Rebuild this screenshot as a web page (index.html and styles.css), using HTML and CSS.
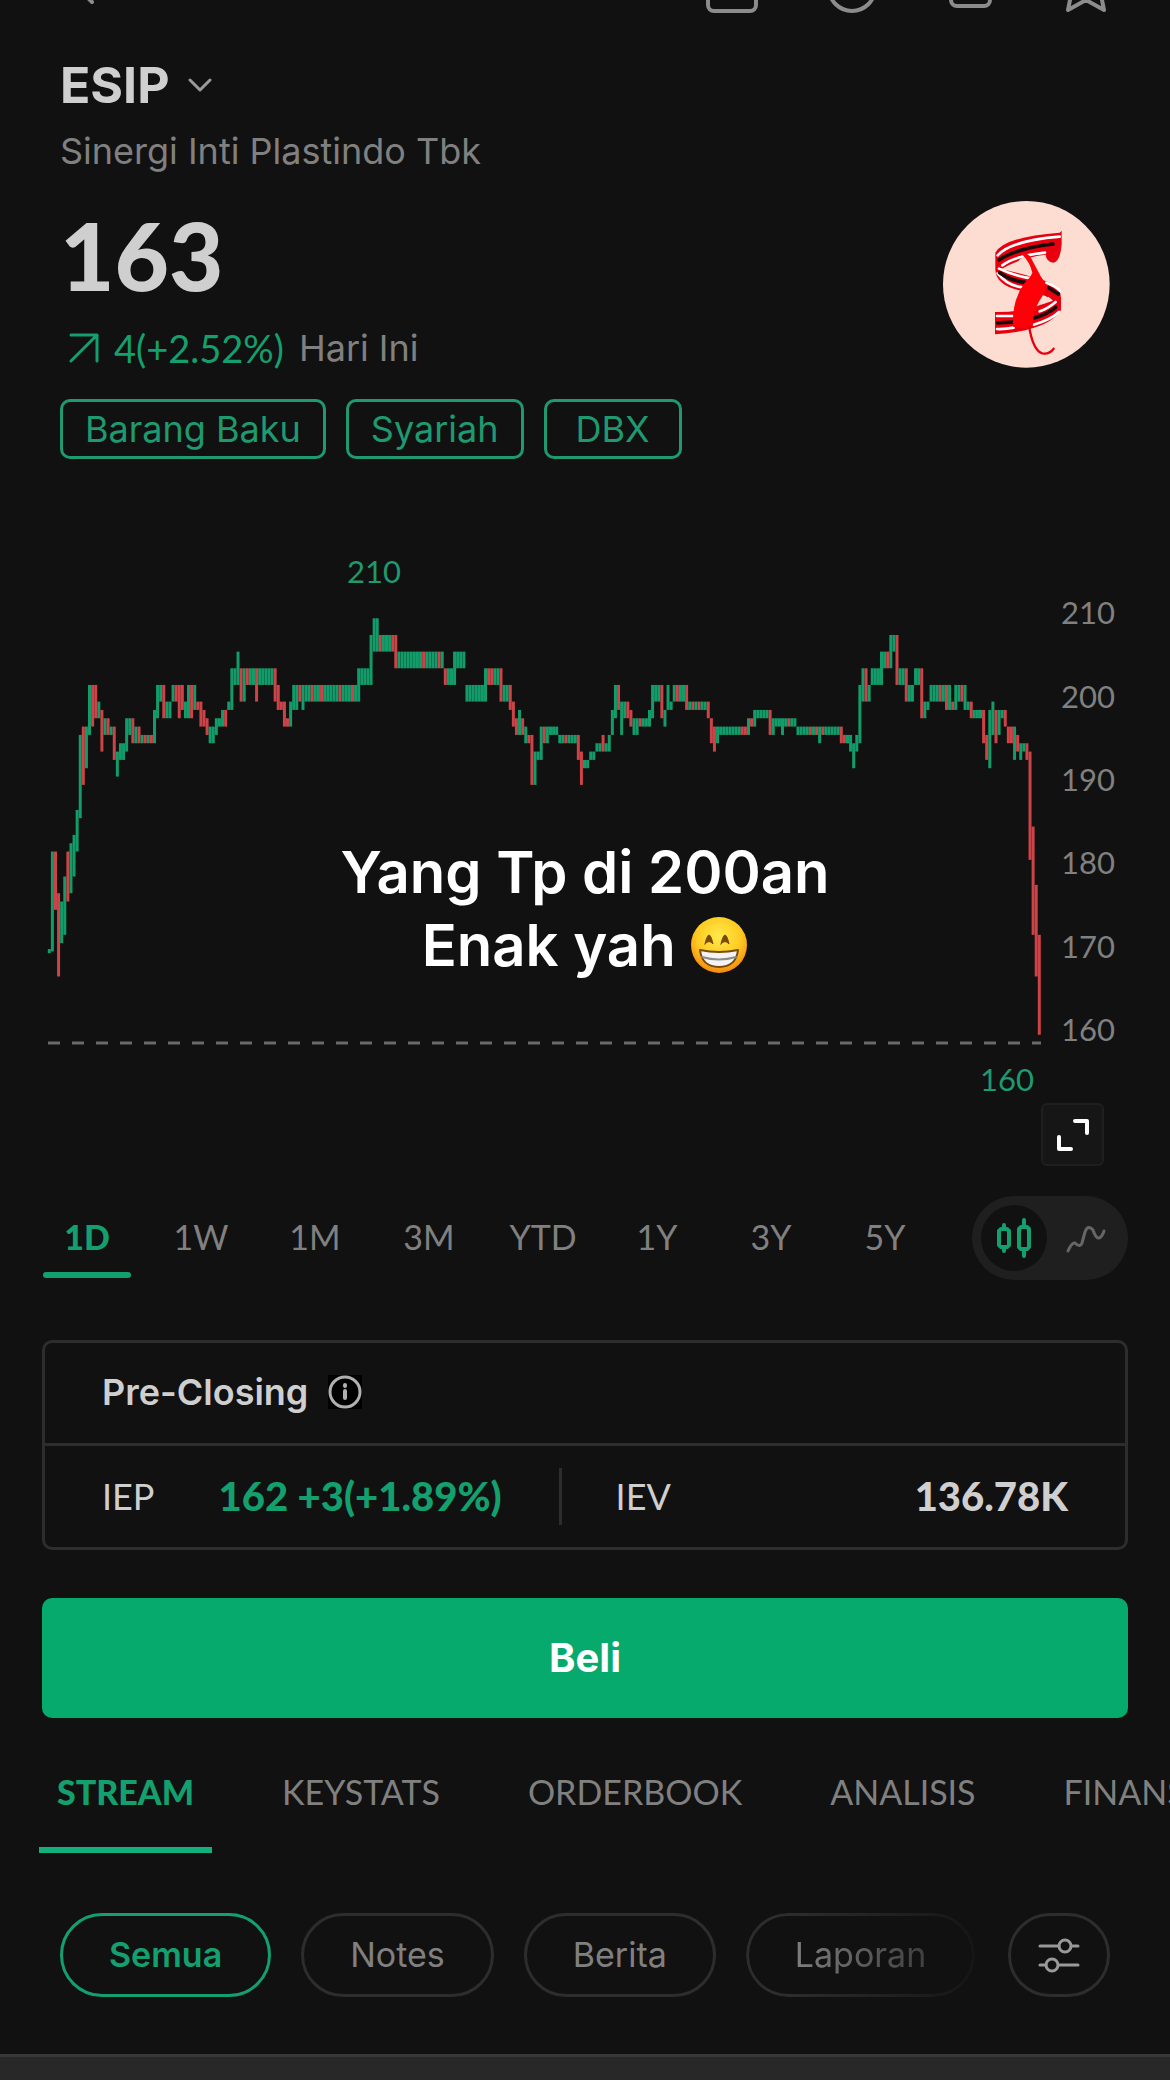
FILE: index.html
```html
<!DOCTYPE html>
<html lang="id">
<head>
    <meta charset="UTF-8">
    <meta name="viewport" content="width=device-width, initial-scale=1.0">
    <title>ESIP - Sinergi Inti Plastindo Tbk</title>

    <link rel="stylesheet" href="styles.css">
</head>
<body>

    <!-- Top bar, scrolled almost out of view -->
    <header class="topbar">
        <button class="icon-btn" aria-label="Kembali">
            <svg viewBox="0 0 52 52"><path d="M35 8 L17 25 L32 40"/></svg>
        </button>
        <div class="topbar-actions">
            <button class="icon-btn" aria-label="Catatan">
                <svg viewBox="0 0 52 52"><rect x="2" y="6" width="48" height="43" rx="6"/></svg>
            </button>
            <button class="icon-btn" aria-label="Alarm">
                <svg viewBox="0 0 52 52"><circle cx="27" cy="26" r="23"/></svg>
            </button>
            <button class="icon-btn" aria-label="Bagikan">
                <svg viewBox="0 0 52 52"><rect x="7" y="4" width="39" height="40" rx="6"/></svg>
            </button>
            <button class="icon-btn" aria-label="Watchlist">
                <svg viewBox="0 0 52 52"><path d="M23 3 L30 18 L42 20 L38 33 L41 48 L23 38 L5 48 L8 33 L4 20 L16 18 Z"/></svg>
            </button>
        </div>
    </header>

    <main>
        <!-- Quote -->
        <section class="quote">
            <h1>
                <button class="symbol">ESIP
                    <svg class="chevron" viewBox="0 0 24 14"><path d="M2 2 L12 12 L22 2"/></svg>
                </button>
            </h1>
            <p class="company">Sinergi Inti Plastindo Tbk</p>
            <div class="price-row">
                <div class="price-col">
                    <div class="price">163</div>
                    <div class="change">
                        <svg class="arrow" viewBox="0 0 30 30"><path d="M2 2 H28 V28 M28 2 L2 28"/></svg>
                        <span class="amount up">4(+2.52%)</span>
                        <span>Hari Ini</span>
                    </div>
                </div>
                <svg class="logo" viewBox="36 32 501 499" role="img" aria-label="Logo ESIP">
                    <circle cx="286" cy="281" r="250" fill="#fdddd2"/>
                    <g fill="#e8000f">
                        <path d="M392 120 V160 Q388 212 368 216 Q346 214 344 192 Q272 200 210 236 Q262 246 312 262 Q390 278 390 322 V358 Q352 420 192 431 V364 Q300 366 362 326 Q330 306 280 302 Q196 288 193 238 V186 Q220 138 386 126 Z"/>
                    </g>
                    <g fill="none" stroke="#fff" stroke-width="8">
                        <path d="M200 194 Q240 150 386 138"/>
                        <path d="M214 224 Q250 196 342 186"/>
                        <path d="M204 234 Q250 256 306 264"/>
                        <path d="M200 248 Q230 286 276 290"/>
                        <path d="M198 376 H248"/>
                        <path d="M198 415 Q222 416 248 411"/>
                        <path d="M326 362 Q350 354 374 334"/>
                        <path d="M308 402 Q358 388 384 364"/>
                        <path d="M346 276 Q374 286 386 300"/>
                    </g>
                    <g fill="none" stroke="#1a0a0a" stroke-width="11">
                        <path d="M204 208 Q252 174 366 160"/>
                        <path d="M206 246 Q240 270 282 275"/>
                        <path d="M354 292 L382 310"/>
                        <path d="M200 397 L246 394"/>
                        <path d="M310 382 Q350 370 374 350"/>
                    </g>
                    <path d="M246 240 Q262 200 282 200 Q300 208 304 246 Q272 232 246 240 Z" fill="#fdddd2"/>
                    <path d="M330 342 L352 318 L366 330 Z" fill="#fdddd2"/>
                    <path d="M270 188 Q290 184 300 202 L330 258 Q352 286 338 310 Q300 366 306 404 Q288 418 246 408 Q242 330 280 278 Q300 258 304 246 Q296 212 270 188 Z" fill="#ff0008"/>
                    <path d="M294 406 Q306 480 334 488 Q354 492 368 474" fill="none" stroke="#e8000f" stroke-width="7"/>
                </svg>
            </div>
            <div class="tags">
                <a class="tag" href="#">Barang Baku</a>
                <a class="tag" href="#">Syariah</a>
                <a class="tag" href="#">DBX</a>
            </div>
        </section>

        <!-- Chart -->
        <section class="chart">
            <svg class="plot" viewBox="0 0 1170 560">
                <text class="extreme" x="374" y="43">210</text>
                <g id="candles"></g>
                <path class="baseline" d="M48 503 H1041"/>
                <text class="extreme" x="1007" y="551">160</text>
                <g id="axis"></g>
            </svg>
            <p class="caption">Yang Tp di 200an<br>Enak yah
                <svg class="emoji" viewBox="0 0 58 58" role="img" aria-label="😁">
                    <defs>
                        <radialGradient id="face" cx="50%" cy="35%" r="65%">
                            <stop offset="0" stop-color="#ffe94a"/>
                            <stop offset="0.6" stop-color="#ffcb22"/>
                            <stop offset="1" stop-color="#f5890f"/>
                        </radialGradient>
                    </defs>
                    <circle cx="29" cy="29" r="28" fill="url(#face)"/>
                    <path d="M15 28 Q19 10 23 28 Q19 23 15 28 Z M31 28 Q35 10 39 28 Q35 23 31 28 Z" fill="#7a4a08" stroke="#7a4a08" stroke-width="1"/>
                    <path d="M10 34 Q29 38 48 34 Q46 51 29 51 Q12 51 10 34 Z" fill="#f4f4f4" stroke="#7a4a08" stroke-width="2" stroke-linejoin="round"/>
                    <path d="M12 41 Q29 46 46 41" fill="none" stroke="#8c8c8c" stroke-width="2"/>
                </svg>
            </p>
            <button class="expand" aria-label="Layar penuh">
                <svg viewBox="0 0 32 32"><path d="M18 2 H30 V14 M2 18 V30 H14"/></svg>
            </button>
        </section>

        <!-- Time range -->
        <section class="ranges">
            <div class="range-list">
                <button class="range active">1D</button>
                <button class="range">1W</button>
                <button class="range">1M</button>
                <button class="range">3M</button>
                <button class="range">YTD</button>
                <button class="range">1Y</button>
                <button class="range">3Y</button>
                <button class="range">5Y</button>
            </div>
            <div class="chart-type">
                <button class="type active" aria-label="Candlestick">
                    <svg viewBox="0 0 40 40"><path d="M10 7 V11 M10 29 V33 M5 13 L7 11 H13 L15 13 V27 L13 29 H7 L5 27 Z M30 2 V9 M30 31 V38 M25 11 L27 9 H33 L35 11 V29 L33 31 H27 L25 29 Z"/></svg>
                </button>
                <button class="type" aria-label="Garis">
                    <svg viewBox="0 0 40 40"><path d="M2 33 Q6 24 9 25 Q14 30 16 25 L19 14 Q22 6 27 12 Q30 21 33 20 Q36 19 38 13"/></svg>
                </button>
            </div>
        </section>

        <!-- Pre-closing -->
        <section class="card">
            <h2>Pre-Closing
                <svg class="info" viewBox="0 0 34 34"><rect width="34" height="34"/><circle cx="17" cy="17" r="15"/><path d="M17 16 V23 M17 10 V11"/></svg>
            </h2>
            <div class="card-row">
                <div class="cell">
                    <span>IEP</span>
                    <strong class="up">162 +3(+1.89%)</strong>
                </div>
                <div class="cell">
                    <span>IEV</span>
                    <strong>136.78K</strong>
                </div>
            </div>
        </section>

        <button class="buy">Beli</button>

        <nav class="tabs">
            <a class="tab active" href="#">STREAM</a>
            <a class="tab" href="#">KEYSTATS</a>
            <a class="tab" href="#">ORDERBOOK</a>
            <a class="tab" href="#">ANALISIS</a>
            <a class="tab" href="#">FINANSIAL</a>
        </nav>

        <div class="filters">
            <button class="chip active">Semua</button>
            <button class="chip">Notes</button>
            <button class="chip">Berita</button>
            <button class="chip fade">Laporan</button>
            <button class="chip settings" aria-label="Filter">
                <svg viewBox="0 0 42 36"><path d="M2 9 H21 M34 9 H40 M2 28 H8 M21 28 H40"/><circle cx="27" cy="9" r="6"/><circle cx="14" cy="28" r="6"/></svg>
            </button>
        </div>
    </main>

    <footer class="composer"></footer>

    <script src="chart.js"></script>
</body>
</html>
```
FILE: styles.css
```css
* {
    box-sizing: border-box;
}
body {
    margin: 0;
    background: #111;
    color: #cfcfcf;
    font-family: Lato, "Liberation Sans", sans-serif;
    font-size: 36px;
    line-height: 44px;
    overflow-x: hidden;
}
h1, h2, p {
    margin: 0;
}
button {
    padding: 0;
    border: 0;
    background: none;
    color: inherit;
    font: inherit;
    cursor: pointer;
}
a {
    color: inherit;
    text-decoration: none;
}
svg {
    display: block;
    fill: none;
    stroke-linecap: round;
    stroke-linejoin: round;
}
.up {
    color: #14a06e;
}
.symbol, .company, .change, .tag, .card h2, .buy, .chip, .caption {
    font-family: Inter, "Liberation Sans", sans-serif;
}

/* top bar */
.topbar {
    display: flex;
    justify-content: space-between;
    align-items: flex-end;
    height: 14px;
    padding: 0 55px 0 60px;
    overflow: hidden;
}
.topbar-actions {
    display: flex;
    gap: 67px;
}
.icon-btn svg {
    width: 52px;
    height: 52px;
    stroke: #8c8c8c;
    stroke-width: 4;
}

/* quote */
.quote {
    padding: 41px 60px 0;
    color: #808080;
}
.symbol {
    display: flex;
    align-items: center;
    gap: 18px;
    color: #cfcfcf;
    font-size: 50px;
    font-weight: 700;
    line-height: 60px;
}
.chevron {
    width: 24px;
    height: 14px;
    stroke: #9a9a9a;
    stroke-width: 3;
}
h1 {
    line-height: 60px;
}
.company {
    margin-top: 14px;
}
.price-row {
    display: flex;
    justify-content: space-between;
    align-items: flex-start;
    margin-top: 28px;
}
.price-col {
    padding-top: 6px;
}
.price {
    color: #cfcfcf;
    font-size: 94px;
    font-weight: 900;
    line-height: 96px;
}
.change {
    display: flex;
    align-items: center;
    gap: 15px;
    margin-top: 23px;
    padding-left: 9px;
}
.amount {
    font-family: Lato, "Liberation Sans", sans-serif;
    font-size: 38px;
}
.arrow {
    width: 30px;
    height: 30px;
    stroke: #14a06e;
    stroke-width: 3;
}
.logo {
    width: 167px;
    height: 167px;
}
.tags {
    display: flex;
    gap: 20px;
    margin-top: 29px;
}
.tag {
    min-width: 138px;
    height: 60px;
    padding: 5px 22px;
    border: 3px solid #1f996f;
    border-radius: 10px;
    color: #1f996f;
    text-align: center;
}

/* chart */
.chart {
    position: relative;
    margin-top: 81px;
}
.plot {
    width: 100%;
}
.plot text {
    font-size: 31px;
    fill: #808080;
}
.plot .extreme {
    fill: #1f996f;
    text-anchor: middle;
}
.candle {
    stroke-width: 3;
    stroke-linecap: butt;
}
.candle.rise {
    stroke: #129c69;
}
.candle.fall {
    stroke: #cc4448;
}
.baseline {
    stroke: #6a6a6a;
    stroke-width: 3;
    stroke-dasharray: 12 12;
    stroke-linecap: butt;
}
/* sits over the plot */
.caption {
    position: absolute;
    top: 296px;
    left: 0;
    right: 0;
    color: #fff;
    font-size: 58px;
    font-weight: 600;
    line-height: 73px;
    text-align: center;
}
.emoji {
    display: inline-block;
    width: 58px;
    height: 58px;
    vertical-align: -8px;
}
.expand {
    display: flex;
    align-items: center;
    justify-content: center;
    width: 63px;
    height: 63px;
    margin: 3px 66px 0 auto;
    border: 2px solid #1f1f1f;
    border-radius: 6px;
    background: #161616;
}
.expand svg {
    width: 32px;
    height: 32px;
    stroke: #fff;
    stroke-width: 4;
}

/* time range */
.ranges {
    display: flex;
    gap: 43px;
    margin: 30px 42px 0 43px;
}
.range-list {
    display: grid;
    grid-template-columns: repeat(8, 1fr);
    gap: 26px;
    flex: 1;
}
.range {
    position: relative;
    padding-bottom: 2px;
    color: #808080;
    font-size: 34px;
}
.range.active {
    color: #14a06e;
    font-weight: 900;
}
.range.active::after {
    content: "";
    position: absolute;
    left: 0;
    right: 0;
    bottom: 2px;
    height: 6px;
    border-radius: 3px;
    background: #14a06e;
}
.chart-type {
    display: flex;
    gap: 6px;
    padding: 9px;
    border-radius: 42px;
    background: #1f1f1f;
}
.type {
    display: flex;
    align-items: center;
    justify-content: center;
    width: 66px;
    height: 66px;
    border-radius: 50%;
}
.type.active {
    background: #111;
}
.type svg {
    width: 40px;
    height: 40px;
    stroke: #666;
    stroke-width: 3;
}
.type.active svg {
    stroke: #14a06e;
    stroke-width: 4;
}

/* pre-closing */
.card {
    margin: 60px 42px 0;
    border: 3px solid #2d2d2d;
    border-radius: 10px;
}
.card h2 {
    display: flex;
    align-items: center;
    gap: 20px;
    padding: 27px 57px 29px;
    border-bottom: 3px solid #2d2d2d;
    font-size: 36px;
    font-weight: 600;
}
.info {
    width: 34px;
    height: 34px;
    stroke: #b0b0b0;
    stroke-width: 3;
}
.info rect {
    fill: #000;
    stroke: none;
}
.info path {
    stroke-width: 4;
}
.card-row {
    display: flex;
    padding: 22px 0;
}
.cell {
    display: flex;
    flex: 1;
    justify-content: space-between;
    align-items: center;
    height: 57px;
    padding: 0 57px 2px 54px;
}
.cell:first-child {
    flex: none;
    gap: 64px;
    padding-left: 57px;
    border-right: 3px solid #2d2d2d;
}
.cell strong {
    font-size: 40px;
    font-weight: 900;
}

.buy {
    display: block;
    width: calc(100% - 84px);
    height: 120px;
    margin: 48px 42px 0;
    border-radius: 10px;
    background: #05aa6c;
    color: #fff;
    font-size: 40px;
    font-weight: 700;
}

/* tabs */
.tabs {
    display: flex;
    gap: 52px;
    margin-top: 52px;
    padding-left: 39px;
    overflow: hidden;
    color: #808080;
    font-size: 34px;
}
.tab {
    padding: 0 18px 33px;
    border-bottom: 6px solid transparent;
}
.tab.active {
    border-color: #12b07c;
    color: #14a06e;
    font-weight: 900;
}

/* filters */
.filters {
    display: flex;
    gap: 30px;
    margin: 60px 60px 0;
}
.chip {
    height: 84px;
    padding: 0 46px;
    border: 3px solid #2d2d2d;
    border-radius: 42px;
    color: #808080;
    font-size: 34px;
}
.chip.active {
    border-color: #14a06e;
    color: #14a06e;
    font-weight: 600;
}
.chip.fade {
    -webkit-mask-image: linear-gradient(to right, #000 20%, rgba(0, 0, 0, 0.2));
    mask-image: linear-gradient(to right, #000 20%, rgba(0, 0, 0, 0.2));
}
.chip.settings {
    margin-left: auto;
    padding: 0 27px;
}
.settings svg {
    width: 42px;
    height: 36px;
    stroke: #9a9a9a;
    stroke-width: 3;
}

.composer {
    height: 26px;
    margin-top: 57px;
    border-top: 3px solid #383838;
    background: #282828;
}
```
FILE: chart.js
```js
// runs of candles: colours (g = up, r = down), high, low
var runs = [
    ["g", 170.3, 169.8], ["g", 182, 170], ["r", 182, 175], ["r", 177, 167], ["g", 176, 171],
    ["g", 179, 172], ["r", 182, 176], ["g", 183, 177], ["g", 184, 179], ["g", 187, 182],
    ["g", 196, 186], ["r", 197, 190], ["g", 197, 192], ["g", 202, 196], ["r", 202, 197],
    ["r", 202, 198], ["g", 200, 198], ["r", 199, 194], ["gr", 198, 196], ["g", 197, 196],
    ["r", 197, 193], ["g", 194, 191], ["gg", 195, 193], ["g", 198, 194], ["g", 198, 196],
    ["r", 198, 195], ["gr", 197, 195], ["grgr", 196, 195], ["g", 199, 195], ["g", 202, 198],
    ["g", 202, 200], ["r", 202, 198], ["gg", 200, 198], ["gr", 202, 200], ["r", 202, 198],
    ["r", 202, 199], ["g", 200, 198], ["gr", 202, 198], ["g", 202, 199], ["r", 200, 199],
    ["r", 200, 197], ["r", 199, 197], ["r", 198, 196], ["gg", 197, 195], ["g", 198, 196],
    ["g", 198, 197], ["gr", 199, 197], ["g", 200, 199], ["g", 204, 199], ["g", 204, 202],
    ["g", 206, 202], ["rg", 204, 200], ["rgg", 204, 202], ["r", 204, 200], ["ggggg", 204, 202],
    ["r", 204, 200], ["r", 202, 199], ["r", 200, 199], ["r", 200, 197], ["r", 198, 197],
    ["g", 200, 197], ["gg", 202, 199], ["r", 202, 200], ["g", 202, 199],
    ["ggrggrgggggrgggrg", 202, 200], ["g", 204, 200], ["ggg", 204, 202], ["g", 208, 202],
    ["gg", 210, 206], ["rgggr", 208, 206], ["r", 208, 204], ["ggggggggrggggrg", 206, 204],
    ["rgg", 204, 202], ["g", 206, 202], ["ggg", 206, 204], ["gggggg", 202, 200], ["g", 204, 200],
    ["rrgg", 204, 202], ["r", 204, 200], ["gg", 202, 200], ["r", 202, 199], ["r", 200, 197],
    ["r", 198, 196], ["g", 199, 196], ["r", 198, 196], ["g", 197, 195], ["r", 196, 195],
    ["r", 196, 190], ["g", 194, 190], ["g", 194, 193], ["g", 197, 193], ["rg", 197, 195],
    ["ggg", 197, 196], ["ggrggg", 196, 195], ["r", 196, 193], ["r", 194, 190], ["gg", 193, 192],
    ["gg", 194, 193], ["gg", 195, 194], ["r", 196, 194], ["g", 195, 194], ["g", 196, 194],
    ["g", 199, 196], ["g", 202, 198], ["r", 202, 199], ["g", 200, 196], ["gr", 200, 198],
    ["r", 199, 197], ["gg", 198, 196], ["rgg", 198, 197], ["g", 199, 197], ["g", 202, 198],
    ["gg", 202, 200], ["r", 202, 198], ["g", 199, 197], ["g", 202, 199], ["g", 200, 199],
    ["grgg", 202, 200], ["r", 202, 199], ["grgrgg", 200, 199], ["r", 200, 198], ["r", 198, 195],
    ["r", 197, 194], ["g", 197, 195], ["gggggggrr", 197, 196], ["g", 198, 196], ["r", 198, 197],
    ["g", 199, 197], ["gggg", 199, 198], ["r", 199, 196], ["g", 198, 196], ["gg", 198, 197],
    ["g", 198, 196], ["grgg", 198, 197], ["ggggrgr", 197, 196], ["g", 197, 195],
    ["rggggg", 197, 196], ["r", 197, 195], ["rg", 196, 195], ["g", 196, 194], ["g", 195, 192],
    ["g", 196, 194], ["g", 202, 195], ["gr", 204, 200], ["g", 202, 200], ["ggg", 204, 202],
    ["g", 206, 202], ["gr", 206, 204], ["g", 208, 204], ["g", 208, 206], ["r", 208, 202],
    ["gg", 204, 202], ["r", 204, 200], ["gg", 202, 200], ["gg", 204, 202], ["r", 204, 198],
    ["g", 200, 198], ["g", 200, 199], ["gggrg", 202, 200], ["rg", 202, 199], ["r", 200, 199],
    ["g", 202, 199], ["gr", 202, 200], ["g", 202, 199], ["g", 200, 199], ["r", 200, 198],
    ["ggg", 199, 198], ["r", 199, 195], ["r", 196, 193], ["g", 199, 192], ["g", 200, 196],
    ["r", 199, 195], ["g", 199, 196], ["g", 199, 198], ["r", 199, 197], ["rr", 197, 195],
    ["g", 197, 193], ["r", 196, 194], ["g", 195, 193], ["g", 195, 194], ["r", 195, 193],
    ["r", 194, 181], ["r", 185, 172], ["r", 178, 167], ["r", 172, 160]
];

var LEFT = 49.3, RIGHT = 1039.3, TOP = 78.3, UNIT = 8.33;

function y(price) {
    return TOP + (210 - price) * UNIT;
}

function add(parent, name, attrs) {
    var el = document.createElementNS("http://www.w3.org/2000/svg", name);
    for (var key in attrs) {
        el.setAttribute(key, attrs[key]);
    }
    document.getElementById(parent).appendChild(el);
    return el;
}

var total = runs.reduce(function(sum, run) { return sum + run[0].length; }, 0);
var step = (RIGHT - LEFT) / (total - 1);
var index = 0;

runs.forEach(function(run) {
    run[0].split("").forEach(function(colour) {
        var x = LEFT + step * index++;
        add("candles", "path", {
            "class": "candle " + (colour === "g" ? "rise" : "fall"),
            d: "M" + x + " " + y(run[1]) + "V" + y(run[2])
        });
    });
});

for (var price = 210; price >= 160; price -= 10) {
    add("axis", "text", { x: 1061, y: y(price) + 6 }).textContent = price;
}
```
